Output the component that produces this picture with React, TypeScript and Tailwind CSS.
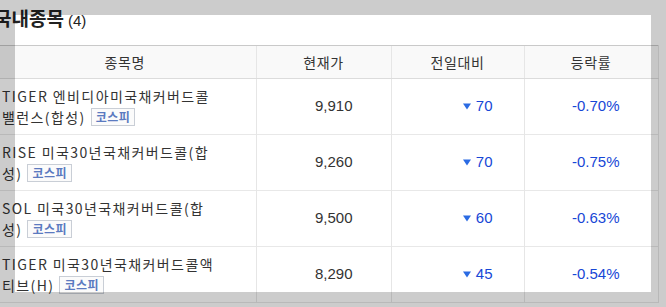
type Row = {
  line1: string;
  line2: string;
  price: string;
  diff: string;
  rate: string;
};

const rows: Row[] = [
  { line1: "TIGER 엔비디아미국채커버드콜", line2: "밸런스(합성)", price: "9,910", diff: "70", rate: "-0.70%" },
  { line1: "RISE 미국30년국채커버드콜(합", line2: "성)", price: "9,260", diff: "70", rate: "-0.75%" },
  { line1: "SOL 미국30년국채커버드콜(합", line2: "성)", price: "9,500", diff: "60", rate: "-0.63%" },
  { line1: "TIGER 미국30년국채커버드콜액", line2: "티브(H)", price: "8,290", diff: "45", rate: "-0.54%" },
];

const kr = "font-['Noto_Sans_CJK_KR',sans-serif]";
const num = "font-['Liberation_Sans',Arial,sans-serif]";

function DownArrow() {
  return (
    <svg width="8" height="7" viewBox="0 0 8 7" className="inline-block mr-[5px] mb-[1px]">
      <polygon points="0,0.5 8,0.5 4,6.5" fill="#2b6be3" />
    </svg>
  );
}

export default function App() {
  return (
    <div className="relative w-[666px] h-[307px] overflow-hidden bg-white text-[#333]">
      <div className="-ml-[6px]">
        <div className="h-[45px] pt-[4px] flex items-baseline whitespace-nowrap">
          <span className={`${kr} text-[19px] font-bold text-[#222] leading-[27px]`}>국내종목</span>
          <span className={`${num} text-[15px] text-[#222] ml-[4px]`}>(4)</span>
        </div>

        <table className="table-fixed border-collapse w-[664px]">
          <colgroup>
            <col className="w-[262px]" />
            <col className="w-[135px]" />
            <col className="w-[133px]" />
            <col className="w-[134px]" />
          </colgroup>
          <thead>
            <tr className={`bg-[#f9f9f9] h-[33px] ${kr} text-[14px] tracking-[0.6px] text-[#333]`}>
              <th className="font-normal border-t border-t-[#c9c9c9] border-b border-b-[#dcdcdc]">종목명</th>
              <th className="font-normal border-t border-t-[#c9c9c9] border-b border-b-[#dcdcdc] border-l border-l-[#e6e6e6]">현재가</th>
              <th className="font-normal border-t border-t-[#c9c9c9] border-b border-b-[#dcdcdc] border-l border-l-[#e6e6e6]">전일대비</th>
              <th className="font-normal border-t border-t-[#c9c9c9] border-b border-b-[#dcdcdc] border-x border-x-[#e6e6e6]">등락률</th>
            </tr>
          </thead>
          <tbody>
            {rows.map((r) => (
              <tr key={r.line1} className="h-[56px] border-b border-b-[#e8e8e8]">
                <td className={`pl-[8px] py-[6px] ${kr} text-[14px] tracking-[1.4px] leading-[21px] text-[#333] whitespace-nowrap`}>
                  <div>{r.line1}</div>
                  <div className="flex items-center">
                    <span>{r.line2}</span>
                    <span className="ml-[5px] inline-flex items-center h-[18px] px-[4px] border border-[#c9ced6] bg-[#fbfbfb] text-[12px] font-bold tracking-[0.5px] text-[#5b7ac0] leading-none">
                      코스피
                    </span>
                  </div>
                </td>
                <td className={`${num} text-[15px] text-right pr-[38px] border-l border-l-[#e6e6e6]`}>{r.price}</td>
                <td className={`${num} text-[15px] text-right pr-[31px] border-l border-l-[#e6e6e6] text-[#1747d6]`}>
                  <DownArrow />
                  {r.diff}
                </td>
                <td className={`${num} text-[15px] text-right pr-[38px] border-x border-x-[#e6e6e6] text-[#1747d6]`}>{r.rate}</td>
              </tr>
            ))}
          </tbody>
        </table>
      </div>

      <div className="pointer-events-none absolute left-[15px] top-[15px] w-[636px] h-[277px] shadow-[0_0_0_2000px_rgba(0,0,0,0.2)]" />
    </div>
  );
}
